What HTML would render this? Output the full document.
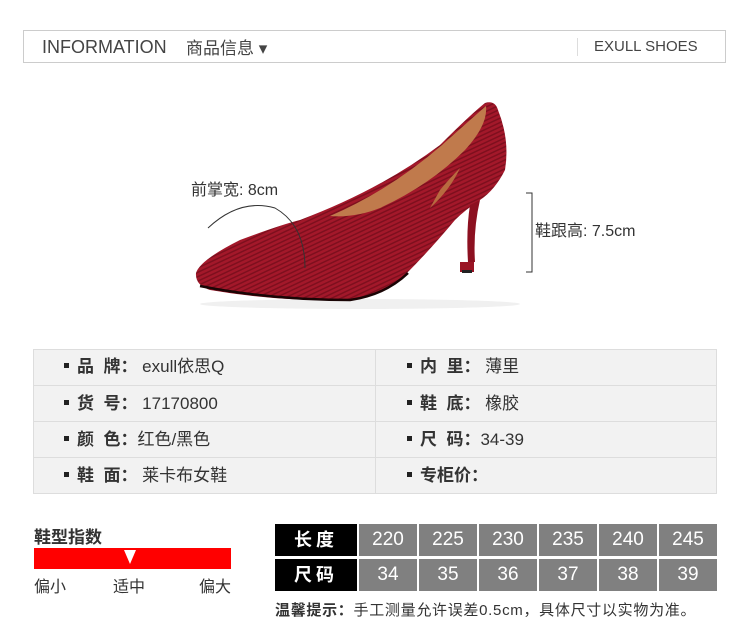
<!DOCTYPE html>
<html><head><meta charset="utf-8"><style>
*{margin:0;padding:0;box-sizing:border-box}
body{width:750px;height:633px;background:#fff;font-family:"Liberation Sans","Noto Sans CJK SC",sans-serif;position:relative;overflow:hidden;color:#333}
.a{position:absolute}
.hdr{left:23px;top:30px;width:703px;height:33px;border:1px solid #ccc}
.tbl{left:33px;top:349px;width:684px;height:145px;background:#f2f2f2;border:1px solid #ddd}
.row{position:absolute;left:0;width:682px;height:36px;border-top:1px solid #ddd;font-size:17px;color:#333;line-height:36px}
.row span{position:absolute}
.dot{display:inline-block;width:5px;height:5px;background:#222;vertical-align:middle;margin-right:8px;position:relative;top:-2px}
b{font-weight:bold}
.c{position:absolute;width:58px;height:32px;background:#808080;color:#fff;font-size:19px;text-align:center;line-height:32px;font-family:"Liberation Sans Narrow","Liberation Sans",sans-serif}
.k{position:absolute;width:82px;height:32px;background:#000;color:#fff;font-size:18px;font-weight:bold;text-align:center;line-height:32px;letter-spacing:4px}
</style></head><body>
<div class="a hdr"></div>
<div class="a" style="left:42px;top:37px;font-size:18px;color:#444">INFORMATION</div>
<div class="a" style="left:186px;top:34px;font-size:17px;color:#444">商品信息 ▾</div>
<div class="a" style="left:577px;top:38px;width:1px;height:18px;background:#ddd"></div>
<div class="a" style="left:594px;top:38px;font-size:15px;color:#444">EXULL SHOES</div>

<svg class="a" style="left:180px;top:90px" width="480" height="230" viewBox="0 0 480 230">
<defs><pattern id="p" width="4" height="4" patternUnits="userSpaceOnUse" patternTransform="rotate(-25)"><rect width="4" height="4" fill="#a3182a"/><rect width="4" height="1.5" fill="#7e0f1e"/></pattern></defs>
<ellipse cx="180" cy="214" rx="160" ry="5" fill="#f0f0f0"/>
<path d="M16 183 Q20 170 60 150 Q100 135 120 130 Q200 100 260 55 Q290 25 305 13 Q315 10 318 20 Q330 50 325 80 Q315 100 300 110 Q285 120 275 130 Q250 160 225 185 Q205 205 170 210 Q100 212 30 200 Q15 195 16 183Z" fill="url(#p)"/>
<path d="M150 126 Q210 100 262 55 Q290 30 306 16 Q308 35 285 60 Q250 95 200 118 Q175 128 150 126Z" fill="#c07a4c"/>
<path d="M260 100 Q270 88 280 78 Q270 100 250 118 Z" fill="#b86a40"/>
<path d="M20 196 Q90 210 170 210 Q205 205 228 183" stroke="#1a0505" stroke-width="2.5" fill="none"/>
<path d="M290 115 Q286 140 288 172 L295 172 Q293 140 300 110Z" fill="#8c1020"/>
<rect x="280" y="172" width="14" height="10" fill="#9a1424"/>
<rect x="282" y="180" width="10" height="3" fill="#222"/>
<path d="M28 138 Q60 108 95 118 Q125 135 125 178" stroke="#333" stroke-width="1" fill="none"/>
<path d="M346 103 L352 103 L352 182 L346 182" stroke="#333" stroke-width="1" fill="none"/>
</svg>
<div class="a" style="left:191px;top:176px;font-size:16px;color:#333">前掌宽: 8cm</div>
<div class="a" style="left:535px;top:217px;font-size:16px;color:#333">鞋跟高: 7.5cm</div>

<div class="a tbl">
<div class="a" style="left:341px;top:0;width:1px;height:143px;background:#ddd"></div>
<div class="row" style="top:-1px;border-top:none"><span style="left:30px"><i class="dot"></i><b>品 &nbsp;牌：</b> exull依思Q</span><span style="left:373px"><i class="dot"></i><b>内 &nbsp;里：</b> 薄里</span></div>
<div class="row" style="top:35px"><span style="left:30px"><i class="dot"></i><b>货 &nbsp;号：</b> 17170800</span><span style="left:373px"><i class="dot"></i><b>鞋 &nbsp;底：</b> 橡胶</span></div>
<div class="row" style="top:71px"><span style="left:30px"><i class="dot"></i><b>颜 &nbsp;色：</b>红色/黑色</span><span style="left:373px"><i class="dot"></i><b>尺 &nbsp;码：</b>34-39</span></div>
<div class="row" style="top:107px"><span style="left:30px"><i class="dot"></i><b>鞋 &nbsp;面：</b> 莱卡布女鞋</span><span style="left:373px"><i class="dot"></i><b>专柜价：</b></span></div>
</div>

<div class="a" style="left:34px;top:523px;font-size:17px;font-weight:bold;color:#333">鞋型指数</div>
<div class="a" style="left:34px;top:548px;width:197px;height:21px;background:#f00"></div>
<svg class="a" style="left:123px;top:549px" width="14" height="16"><path d="M1 1 L13 1 L7 15Z" fill="#fff"/></svg>
<div class="a" style="left:34px;top:573px;font-size:16px;color:#333">偏小</div>
<div class="a" style="left:113px;top:573px;font-size:16px;color:#333">适中</div>
<div class="a" style="left:199px;top:573px;font-size:16px;color:#333">偏大</div>

<div class="k" style="left:275px;top:524px">长度</div>
<div class="c" style="left:359px;top:524px">220</div><div class="c" style="left:419px;top:524px">225</div><div class="c" style="left:479px;top:524px">230</div><div class="c" style="left:539px;top:524px">235</div><div class="c" style="left:599px;top:524px">240</div><div class="c" style="left:659px;top:524px">245</div>
<div class="k" style="left:275px;top:559px">尺码</div>
<div class="c" style="left:359px;top:559px">34</div><div class="c" style="left:419px;top:559px">35</div><div class="c" style="left:479px;top:559px">36</div><div class="c" style="left:539px;top:559px">37</div><div class="c" style="left:599px;top:559px">38</div><div class="c" style="left:659px;top:559px">39</div>
<div class="a" style="left:275px;top:599px;font-size:15px;letter-spacing:0.7px;color:#333"><b>温馨提示：</b>手工测量允许误差0.5cm，具体尺寸以实物为准。</div>
</body></html>
